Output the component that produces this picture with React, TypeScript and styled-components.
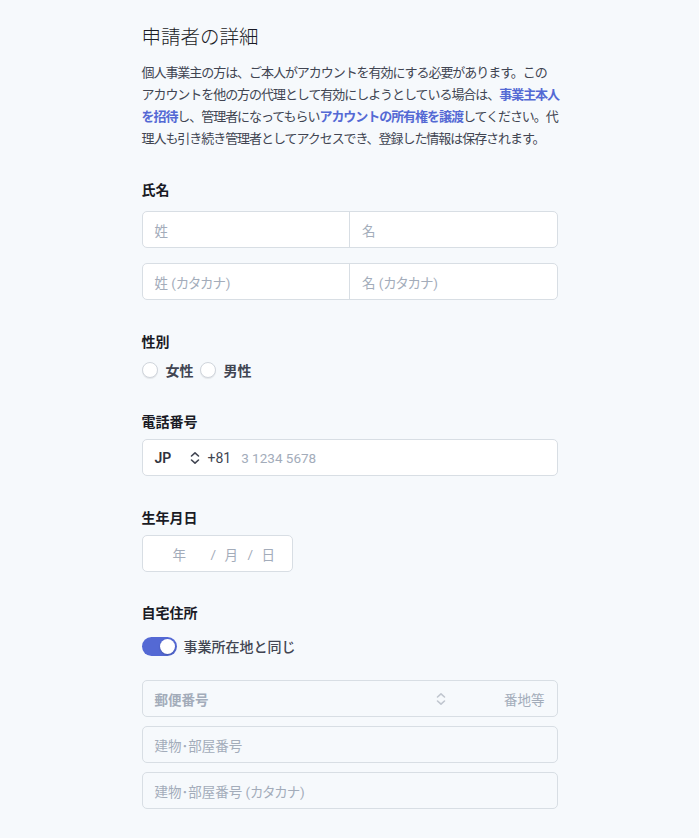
import styled, { createGlobalStyle } from 'styled-components';

const GlobalStyle = createGlobalStyle`
    html, body {
        margin: 0;
        padding: 0;
        background: #f6f9fc;
        font-family: "Inter", "Noto Sans CJK JP", sans-serif;
        color: #30313d;
    }
`

const Page = styled.div`
    width: 416px;
    margin: 0 auto;
    padding-top: 23px;
    padding-bottom: 29px;
`

const Title = styled.h1`
    margin: 0;
    font-size: 19.5px;
    line-height: 28px;
    font-weight: 300;
    color: #1a1b25;
`

const Intro = styled.p`
    margin: 10px 0 0;
    font-size: 13px;
    line-height: 22px;
    letter-spacing: -1.05px;
    white-space: nowrap;
    color: #414552;
`

const Link = styled.a`
    color: #5469d4;
    font-weight: 600;
    text-decoration: none;
`

const Section = styled.section<{ $top: number }>`
    margin-top: ${(p) => p.$top}px;
`

const Label = styled.div<{ $gap: number }>`
    font-size: 14px;
    line-height: 20px;
    font-weight: 600;
    color: #1a1b25;
    margin-bottom: ${(p) => p.$gap}px;
`

const Stack = styled.div<{ $gap: number }>`
    display: flex;
    flex-direction: column;
    gap: ${(p) => p.$gap}px;
`

const Field = styled.div<{ $disabled?: boolean; $width?: number }>`
    display: flex;
    align-items: center;
    height: 37px;
    box-sizing: border-box;
    width: ${(p) => (p.$width ? `${p.$width}px` : '100%')};
    background: ${(p) => (p.$disabled ? '#f6f9fc' : '#ffffff')};
    border: 1px solid #d8dee4;
    border-radius: 5px;
    font-family: "Roboto", "Noto Sans CJK JP", sans-serif;
    font-size: 13.5px;
    font-feature-settings: "palt";
`

const Half = styled.div`
    flex: 1;
    height: 100%;
    display: flex;
    align-items: center;
    padding: 0 12px;
    & + & {
        border-left: 1px solid #d8dee4;
    }
`

const Placeholder = styled.span`
    color: #a3acba;
`

const Pad = styled.div`
    flex: 1;
    padding: 0 12px;
    display: flex;
    align-items: center;
`

const RadioRow = styled.div`
    display: flex;
    align-items: center;
    gap: 6px;
    margin-top: 8px;
    height: 20px;
`

const RadioItem = styled.label`
    display: flex;
    align-items: center;
    gap: 8px;
    font-size: 14px;
    font-weight: 600;
    color: #414552;
`

const RadioCircle = styled.span`
    width: 14px;
    height: 14px;
    border-radius: 50%;
    background: #fff;
    border: 1px solid #d0d5dc;
    box-shadow: 0 1px 1px rgba(0, 0, 0, 0.08);
`

const CountryCode = styled.span`
    font-weight: 600;
    font-size: 14px;
    color: #30313d;
    width: 34px;
`

const Dial = styled.span`
    color: #414552;
    font-size: 14px;
    margin: 0 10px 0 7px;
`

const DateRow = styled.div`
    display: flex;
    align-items: center;
    padding-left: 30px;
    color: #a3acba;
`

const DatePart = styled.span<{ $w: number }>`
    width: ${(p) => p.$w}px;
`

const ToggleRow = styled.div`
    display: flex;
    align-items: center;
    gap: 7px;
    margin-top: 13px;
    margin-bottom: 24px;
    font-size: 14px;
    font-weight: 500;
    color: #414552;
`

const Toggle = styled.span`
    width: 35px;
    height: 19px;
    border-radius: 10px;
    background: #5469d4;
    display: flex;
    align-items: center;
    justify-content: flex-end;
    padding: 0 2px;
    box-sizing: border-box;
`

const Knob = styled.span`
    width: 15px;
    height: 15px;
    border-radius: 50%;
    background: #fff;
    box-shadow: 0 1px 2px rgba(0, 0, 0, 0.2);
`

const Postal = styled.span`
    font-weight: 600;
    color: #a3acba;
    flex: 1;
`

const Rest = styled.span`
    color: #a3acba;
    width: 98px;
    text-align: right;
`

const Chevron = ({ color }: { color: string }) => (
    <svg width="12" height="14" viewBox="0 0 12 14" fill="none">
        <path d="M2.5 5L6 1.8L9.5 5" stroke={color} strokeWidth="1.6" strokeLinecap="round" strokeLinejoin="round" />
        <path d="M2.5 9L6 12.2L9.5 9" stroke={color} strokeWidth="1.6" strokeLinecap="round" strokeLinejoin="round" />
    </svg>
)

const App = () => {
    return (
        <Page>
            <GlobalStyle />
            <Title>申請者の詳細</Title>
            <Intro>
                個人事業主の方は、ご本人がアカウントを有効にする必要があります。この<br />
                アカウントを他の方の代理として有効にしようとしている場合は、<Link>事業主本人<br />
                を招待</Link>し、管理者になってもらい<Link>アカウントの所有権を譲渡</Link>してください。代<br />
                理人も引き続き管理者としてアクセスでき、登録した情報は保存されます。
            </Intro>

            <Section $top={31}>
                <Label $gap={11}>氏名</Label>
                <Stack $gap={15}>
                    <Field>
                        <Half><Placeholder>姓</Placeholder></Half>
                        <Half><Placeholder>名</Placeholder></Half>
                    </Field>
                    <Field>
                        <Half><Placeholder>姓 (カタカナ)</Placeholder></Half>
                        <Half><Placeholder>名 (カタカナ)</Placeholder></Half>
                    </Field>
                </Stack>
            </Section>

            <Section $top={32}>
                <Label $gap={0}>性別</Label>
                <RadioRow>
                    <RadioItem><RadioCircle />女性</RadioItem>
                    <RadioItem><RadioCircle />男性</RadioItem>
                </RadioRow>
            </Section>

            <Section $top={32}>
                <Label $gap={7}>電話番号</Label>
                <Field>
                    <Pad>
                        <CountryCode>JP</CountryCode>
                        <Chevron color="#414552" />
                        <Dial>+81</Dial>
                        <Placeholder>3 1234 5678</Placeholder>
                    </Pad>
                </Field>
            </Section>

            <Section $top={32}>
                <Label $gap={7}>生年月日</Label>
                <Field $width={151}>
                    <DateRow>
                        <DatePart $w={38}>年</DatePart>
                        <DatePart $w={14}>/</DatePart>
                        <DatePart $w={23}>月</DatePart>
                        <DatePart $w={14}>/</DatePart>
                        <DatePart $w={14}>日</DatePart>
                    </DateRow>
                </Field>
            </Section>

            <Section $top={31}>
                <Label $gap={0}>自宅住所</Label>
                <ToggleRow>
                    <Toggle><Knob /></Toggle>
                    事業所在地と同じ
                </ToggleRow>
                <Stack $gap={9}>
                    <Field $disabled>
                        <Pad>
                            <Postal>郵便番号</Postal>
                            <Chevron color="#c0c6cf" />
                            <Rest>番地等</Rest>
                        </Pad>
                    </Field>
                    <Field $disabled>
                        <Pad><Placeholder>建物･部屋番号</Placeholder></Pad>
                    </Field>
                    <Field $disabled>
                        <Pad><Placeholder>建物･部屋番号 (カタカナ)</Placeholder></Pad>
                    </Field>
                </Stack>
            </Section>
        </Page>
    )
}

export default App;
